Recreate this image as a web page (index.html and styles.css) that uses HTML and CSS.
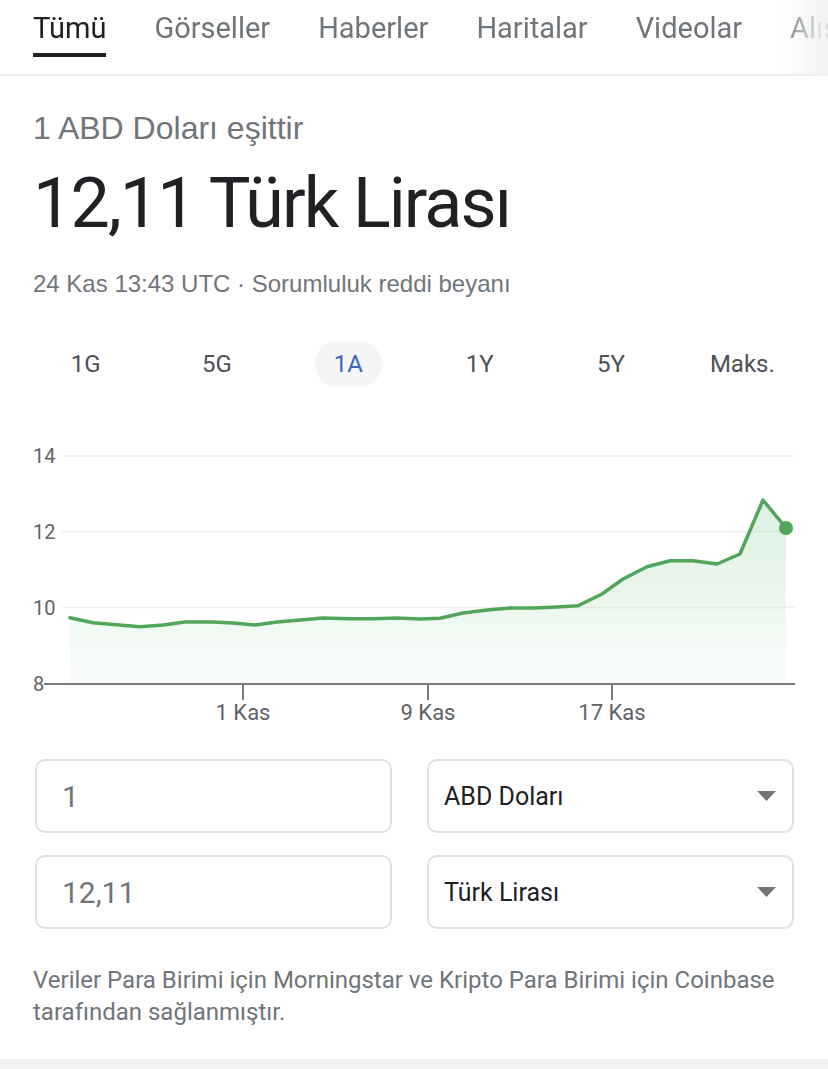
FILE: index.html
```html
<!DOCTYPE html><html lang="tr">
<head>
  <meta charset="UTF-8" />
  <meta name="viewport" content="width=device-width, initial-scale=1.0"/>
  <title>ABD Doları - Türk Lirası</title>
  <link rel="stylesheet" href="styles.css">
</head>
<body>
<nav class="tabs">
  <a class="tab active">Tümü</a>
  <a class="tab">Görseller</a>
  <a class="tab">Haberler</a>
  <a class="tab">Haritalar</a>
  <a class="tab">Videolar</a>
  <a class="tab">Alışveriş</a>
</nav>

<main class="card">
  <div class="eq-label">1 ABD Doları eşittir</div>
  <div class="eq-value">12,11 Türk Lirası</div>
  <div class="eq-meta">24 Kas 13:43 UTC · Sorumluluk reddi beyanı</div>

  <div class="ranges">
    <span>1G</span>
    <span>5G</span>
    <span class="active">1A</span>
    <span>1Y</span>
    <span>5Y</span>
    <span>Maks.</span>
  </div>

  <svg class="chart" width="828" height="300" viewBox="0 0 828 300">
    <defs>
      <linearGradient id="area" x1="0" y1="0" x2="0" y2="1">
        <stop offset="0" stop-color="#34a853" stop-opacity="0.17"/>
        <stop offset="1" stop-color="#34a853" stop-opacity="0.03"/>
      </linearGradient>
    </defs>
    <g class="grid">
      <line x1="62" y1="26" x2="795" y2="26"/>
      <line x1="62" y1="101.5" x2="795" y2="101.5"/>
      <line x1="62" y1="177.5" x2="795" y2="177.5"/>
    </g>
    <g class="y-labels">
      <text x="33" y="33">14</text>
      <text x="33" y="108.5">12</text>
      <text x="33" y="184.5">10</text>
      <text x="33" y="261">8</text>
    </g>
    <path class="area" d="M70 187.7 L93 192.7 L140 196.7 L163 195 L185 192 L213 192 L233 193 L255 195 L277 192 L300 190 L323 188 L350 188.7 L373 188.7 L397 188 L420 189 L440 188.3 L463 183 L487 180 L510 178 L533 178 L557 177 L578 175.7 L602 164 L623 149 L647 136.7 L670 130.7 L693 130.7 L717 134 L740 124 L763 70 L786 98 L786 254 L70 254 Z"/>
    <path class="line" d="M70 187.7 L93 192.7 L140 196.7 L163 195 L185 192 L213 192 L233 193 L255 195 L277 192 L300 190 L323 188 L350 188.7 L373 188.7 L397 188 L420 189 L440 188.3 L463 183 L487 180 L510 178 L533 178 L557 177 L578 175.7 L602 164 L623 149 L647 136.7 L670 130.7 L693 130.7 L717 134 L740 124 L763 70 L786 98"/>
    <circle class="dot" cx="786" cy="98" r="7"/>
    <g class="axis">
      <line x1="44" y1="254" x2="795" y2="254"/>
      <line x1="243" y1="254" x2="243" y2="270"/>
      <line x1="428" y1="254" x2="428" y2="270"/>
      <line x1="612" y1="254" x2="612" y2="270"/>
    </g>
    <g class="x-labels">
      <text x="243" y="290">1 Kas</text>
      <text x="428" y="290">9 Kas</text>
      <text x="612" y="290">17 Kas</text>
    </g>
  </svg>

  <div class="converter">
    <div class="field amount">1</div>
    <div class="field select">ABD Doları
      <svg class="caret" width="19" height="10" viewBox="0 0 19 10"><path d="M0 0 H19 L9.5 10 Z"/></svg>
    </div>
    <div class="field amount">12,11</div>
    <div class="field select">Türk Lirası
      <svg class="caret" width="19" height="10" viewBox="0 0 19 10"><path d="M0 0 H19 L9.5 10 Z"/></svg>
    </div>
  </div>

  <p class="source">Veriler Para Birimi için Morningstar ve Kripto Para Birimi için Coinbase tarafından sağlanmıştır.</p>
</main>
</body>
</html>
```

FILE: styles.css
```css
* { box-sizing: border-box; margin: 0; padding: 0; }
html, body { background: #f1f3f4; font-family: Roboto, 'Liberation Sans', sans-serif; color: #202124; }
body { width: 828px; }

.tabs { display: flex; gap: 48px; height: 76px; padding: 11px 0 0 33px; background: #fff; border-bottom: 2px solid #ececec; white-space: nowrap; overflow: hidden; -webkit-mask-image: linear-gradient(to right, #000 94%, rgba(0,0,0,.15) 99%); mask-image: linear-gradient(to right, #000 94%, rgba(0,0,0,.15) 99%); }
.tab { font-size: 29px; line-height: 34px; color: #70757a; padding-bottom: 8px; border-bottom: 4px solid transparent; height: 46px; }
.tab.active { color: #202124; border-bottom-color: #202124; }

.card { background: #fff; padding: 34px 33px 31px; }
.eq-label { font-family: 'Liberation Sans', Arial, sans-serif; font-size: 32px; line-height: 36px; color: #70757a; }
.eq-value { margin-top: 17px; font-size: 70px; line-height: 80px; letter-spacing: -1.9px; color: #202124; }
.eq-meta { margin-top: 26px; font-family: 'Liberation Sans', Arial, sans-serif; font-size: 24px; line-height: 30px; color: #70757a; }

.ranges { display: grid; grid-template-columns: repeat(6, 1fr); margin: 42px -13px 0; }
.ranges span { justify-self: center; height: 46px; line-height: 46px; padding: 0 19px; border-radius: 23px; font-size: 24px; color: #4d5156; }
.ranges span.active { background: #f4f5f6; color: #3c64c0; }

.chart { display: block; margin: 43px -33px 0; }
.chart .grid line { stroke: #f0f0f0; stroke-width: 1.5; }
.chart .axis line { stroke: #7a7a7a; stroke-width: 2; }
.chart text { font-family: Roboto, sans-serif; fill: #5f6368; }
.chart .y-labels text { font-size: 20px; }
.chart .x-labels text { font-size: 22px; text-anchor: middle; }
.chart .area { fill: url(#area); }
.chart .line { fill: none; stroke: #52a55a; stroke-width: 3.5; stroke-linejoin: round; stroke-linecap: round; }
.chart .dot { fill: #52a55a; }

.converter { display: grid; grid-template-columns: 357px 367px; gap: 22px 35px; margin: 29px 0 0 2px; }
.field { height: 74px; border: 2px solid #dfe1e5; border-radius: 10px; display: flex; align-items: center; }
.amount { padding-left: 25px; font-size: 30px; color: #70757a; }
.select { padding: 0 16px 0 15px; font-size: 25px; color: #202124; justify-content: space-between; }
.caret path { fill: #70757a; }

.source { margin-top: 35px; font-size: 24px; line-height: 32px; color: #70757a; }
```
